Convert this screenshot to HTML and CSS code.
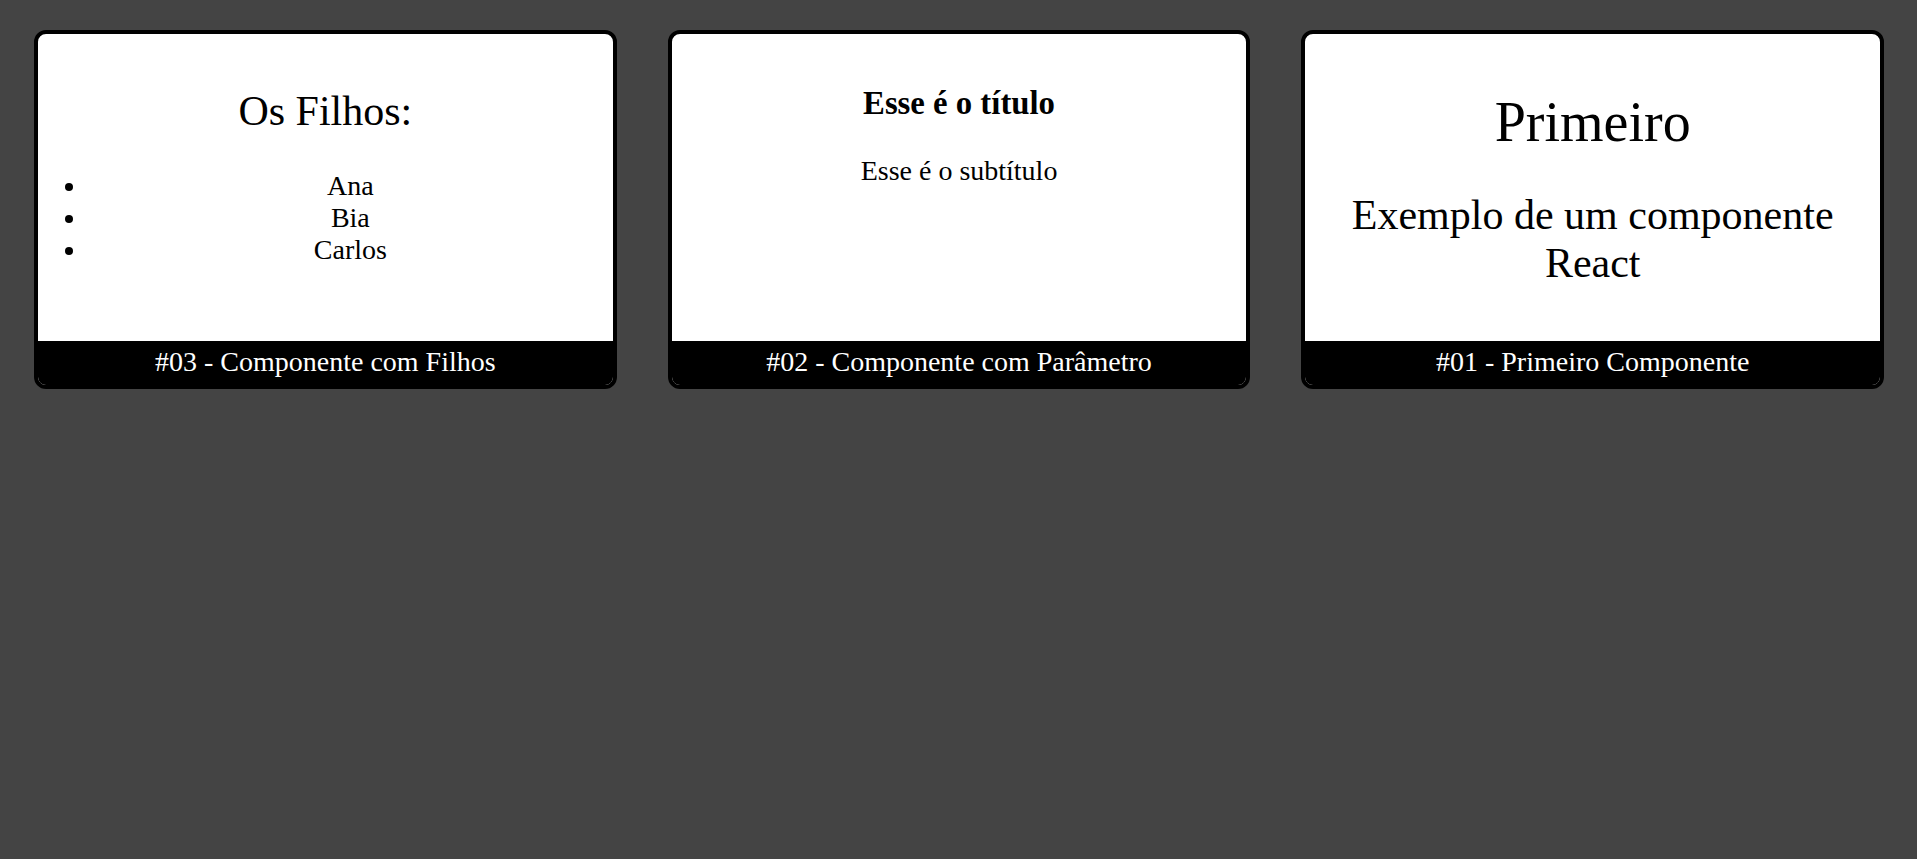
FILE: index.html
```html
<!DOCTYPE html>
<html lang="pt-BR">
<head>
<meta charset="utf-8">
<title>Componentes React</title>
<link rel="stylesheet" href="styles.css">
</head>
<body>
<div class="cards">
  <div class="card">
    <div class="content">
      <h2 class="title-2">Os Filhos:</h2>
      <ul class="kids">
        <li>Ana</li>
        <li>Bia</li>
        <li>Carlos</li>
      </ul>
    </div>
    <div class="footer">#03 - Componente com Filhos</div>
  </div>
  <div class="card">
    <div class="content">
      <h3 class="title-3">Esse é o título</h3>
      <p class="text">Esse é o subtítulo</p>
    </div>
    <div class="footer">#02 - Componente com Parâmetro</div>
  </div>
  <div class="card">
    <div class="content">
      <h1 class="title-1">Primeiro</h1>
      <h2 class="title-2">Exemplo de um componente React</h2>
    </div>
    <div class="footer">#01 - Primeiro Componente</div>
  </div>
</div>
</body>
</html>
```

FILE: styles.css
```css
html, body {
  margin: 0;
  padding: 0;
}

body {
  background: #444444;
  font-family: "Liberation Serif", "Times New Roman", serif;
  font-size: 28px;
  color: #000;
}

.cards {
  display: flex;
  gap: 51px;
  padding: 30px 33px 0 34px;
}

.card {
  flex: 1 1 0;
  height: 359px;
  box-sizing: border-box;
  border: 4px solid #000;
  border-radius: 12px;
  background: #fff;
  overflow: hidden;
  display: flex;
  flex-direction: column;
}

.content {
  flex: 1;
  padding-top: 18px;
  text-align: center;
}

.title-1 {
  font-size: 56px;
  font-weight: normal;
  margin: 37.5px 0;
}

.title-2 {
  font-size: 42px;
  font-weight: normal;
  margin: 35px 0;
}

.title-3 {
  font-size: 32.76px;
  font-weight: bold;
  margin: 32.76px 0;
}

.text {
  margin: 28px 0;
}

.kids {
  margin: 28px 0;
  padding-left: 50px;
}

.footer {
  background: #000;
  color: #fff;
  text-align: center;
  padding: 5px 0 7px;
  line-height: 32px;
}
```
